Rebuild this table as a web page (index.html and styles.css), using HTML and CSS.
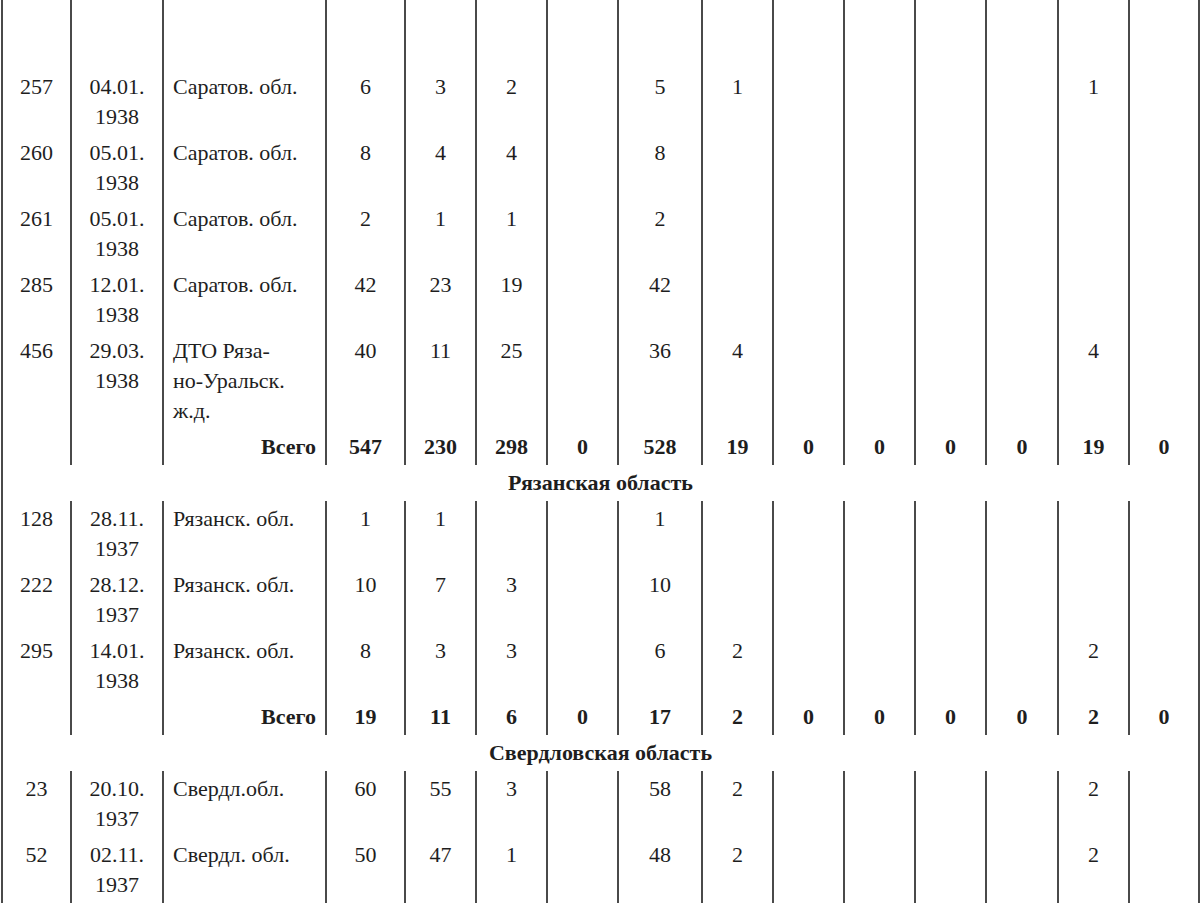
FILE: index.html
```html
<!DOCTYPE html>
<html lang="ru">
<head>
<meta charset="utf-8">
<title>Таблица</title>
<link rel="stylesheet" href="styles.css">
</head>
<body>
<table class="tbl">
  <colgroup>
    <col class="c-num"><col class="c-date"><col class="c-name">
    <col class="c-79"><col class="c-71"><col class="c-71"><col class="c-71"><col class="c-84">
    <col class="c-71"><col class="c-71"><col class="c-71"><col class="c-71"><col class="c-72">
    <col class="c-71"><col class="c-70">
  </colgroup>
  <tbody>
    <tr class="lead"><td></td><td></td><td></td><td></td><td></td><td></td><td></td><td></td><td></td><td></td><td></td><td></td><td></td><td></td><td></td></tr>
    <tr><td>257</td><td>04.01.<br>1938</td><td class="name">Саратов. обл.</td><td>6</td><td>3</td><td>2</td><td></td><td>5</td><td>1</td><td></td><td></td><td></td><td></td><td>1</td><td></td></tr>
    <tr><td>260</td><td>05.01.<br>1938</td><td class="name">Саратов. обл.</td><td>8</td><td>4</td><td>4</td><td></td><td>8</td><td></td><td></td><td></td><td></td><td></td><td></td><td></td></tr>
    <tr><td>261</td><td>05.01.<br>1938</td><td class="name">Саратов. обл.</td><td>2</td><td>1</td><td>1</td><td></td><td>2</td><td></td><td></td><td></td><td></td><td></td><td></td><td></td></tr>
    <tr><td>285</td><td>12.01.<br>1938</td><td class="name">Саратов. обл.</td><td>42</td><td>23</td><td>19</td><td></td><td>42</td><td></td><td></td><td></td><td></td><td></td><td></td><td></td></tr>
    <tr><td>456</td><td>29.03.<br>1938</td><td class="name">ДТО Ряза-<br>но-Уральск.<br>ж.д.</td><td>40</td><td>11</td><td>25</td><td></td><td>36</td><td>4</td><td></td><td></td><td></td><td></td><td>4</td><td></td></tr>
    <tr class="total"><td></td><td></td><td class="label">Всего</td><td>547</td><td>230</td><td>298</td><td>0</td><td>528</td><td>19</td><td>0</td><td>0</td><td>0</td><td>0</td><td>19</td><td>0</td></tr>
    <tr class="section"><td colspan="15">Рязанская область</td></tr>
    <tr><td>128</td><td>28.11.<br>1937</td><td class="name">Рязанск. обл.</td><td>1</td><td>1</td><td></td><td></td><td>1</td><td></td><td></td><td></td><td></td><td></td><td></td><td></td></tr>
    <tr><td>222</td><td>28.12.<br>1937</td><td class="name">Рязанск. обл.</td><td>10</td><td>7</td><td>3</td><td></td><td>10</td><td></td><td></td><td></td><td></td><td></td><td></td><td></td></tr>
    <tr><td>295</td><td>14.01.<br>1938</td><td class="name">Рязанск. обл.</td><td>8</td><td>3</td><td>3</td><td></td><td>6</td><td>2</td><td></td><td></td><td></td><td></td><td>2</td><td></td></tr>
    <tr class="total"><td></td><td></td><td class="label">Всего</td><td>19</td><td>11</td><td>6</td><td>0</td><td>17</td><td>2</td><td>0</td><td>0</td><td>0</td><td>0</td><td>2</td><td>0</td></tr>
    <tr class="section"><td colspan="15">Свердловская область</td></tr>
    <tr><td>23</td><td>20.10.<br>1937</td><td class="name">Свердл.обл.</td><td>60</td><td>55</td><td>3</td><td></td><td>58</td><td>2</td><td></td><td></td><td></td><td></td><td>2</td><td></td></tr>
    <tr><td>52</td><td>02.11.<br>1937</td><td class="name">Свердл. обл.</td><td>50</td><td>47</td><td>1</td><td></td><td>48</td><td>2</td><td></td><td></td><td></td><td></td><td>2</td><td></td></tr>
  </tbody>
</table>
</body>
</html>
```

FILE: styles.css
```css
html, body {
  margin: 0;
  padding: 0;
  background: #ffffff;
}

body {
  font-family: "Liberation Serif", "Times New Roman", serif;
  font-size: 22px;
  color: #1e1e1e;
  overflow: hidden;
}

.tbl {
  width: 1198px;
  margin-left: 1px;
  table-layout: fixed;
  border-collapse: collapse;
  border-left: 2px solid #4a4a4a;
  border-right: 2px solid #4a4a4a;
}

.c-num { width: 69px; }
.c-date { width: 92px; }
.c-name { width: 163px; }
.c-79 { width: 79px; }
.c-71 { width: 71px; }
.c-72 { width: 72px; }
.c-84 { width: 84px; }
.c-70 { width: 70px; }

.tbl td {
  padding: 3px 0;
  line-height: 30px;
  text-align: center;
  vertical-align: top;
  white-space: nowrap;
}

.tbl td + td {
  border-left: 2px solid #4a4a4a;
}

.tbl .lead td {
  height: 69px;
  padding: 0;
}

.tbl td.name {
  text-align: left;
  padding-left: 9px;
}

.tbl td.label {
  text-align: right;
  padding-right: 9px;
}

.total td {
  font-weight: bold;
}

.section td {
  font-weight: bold;
  text-align: center;
}
```
